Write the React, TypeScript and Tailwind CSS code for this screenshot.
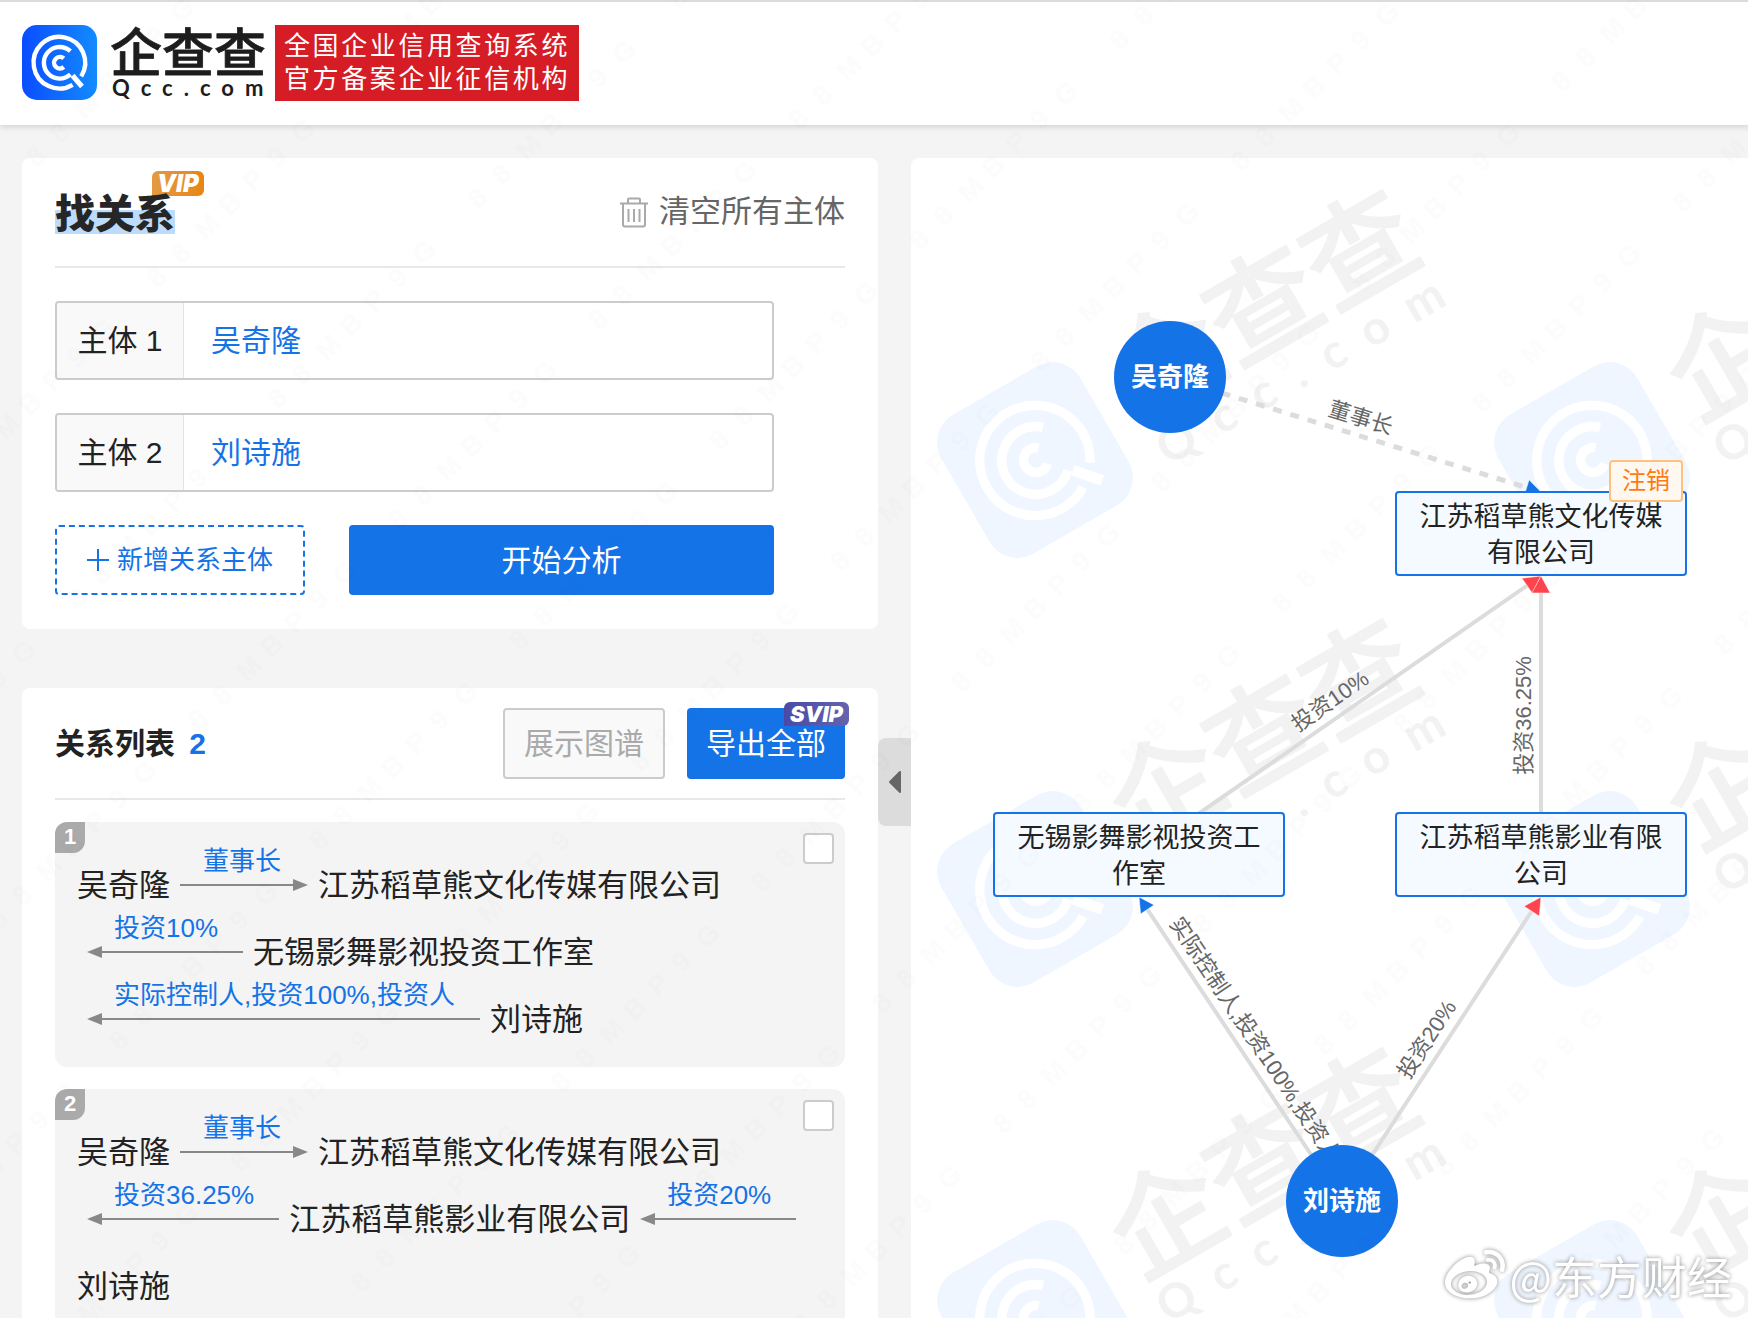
import { useState } from "react";
import clsx from "clsx";
import { FaWeibo } from "react-icons/fa";

type Side = "left" | "right";

interface Step {
  kind: "name" | "arrow";
  text: string;
  to?: Side;
}

interface Edge {
  from: [number, number];
  tip: [number, number];
  label: string;
  color: string;
  head: number;
  dashed?: boolean;
  flip?: boolean;
}

const BLUE = "#1573e8";
const RED = "#ff444d";

const RELATIONS: Step[][] = [
  [
    { kind: "name", text: "吴奇隆" },
    { kind: "arrow", text: "董事长", to: "right" },
    { kind: "name", text: "江苏稻草熊文化传媒有限公司" },
    { kind: "arrow", text: "投资10%", to: "left" },
    { kind: "name", text: "无锡影舞影视投资工作室" },
    { kind: "arrow", text: "实际控制人,投资100%,投资人", to: "left" },
    { kind: "name", text: "刘诗施" },
  ],
  [
    { kind: "name", text: "吴奇隆" },
    { kind: "arrow", text: "董事长", to: "right" },
    { kind: "name", text: "江苏稻草熊文化传媒有限公司" },
    { kind: "arrow", text: "投资36.25%", to: "left" },
    { kind: "name", text: "江苏稻草熊影业有限公司" },
    { kind: "arrow", text: "投资20%", to: "left" },
    { kind: "name", text: "刘诗施" },
  ],
];

// Graph coordinates are relative to the canvas panel
const EDGES: Edge[] = [
  { from: [259, 219], tip: [630, 334], label: "董事长", color: BLUE, head: 15, dashed: true },
  { from: [228, 697], tip: [630, 418], label: "投资10%", color: RED, head: 17 },
  { from: [630, 697], tip: [630, 418], label: "投资36.25%", color: RED, head: 17 },
  { from: [431, 1043], tip: [228, 739], label: "实际控制人,投资100%,投资人", color: BLUE, head: 15, flip: true },
  { from: [431, 1043], tip: [630, 739], label: "投资20%", color: RED, head: 17 },
];

const WATERMARKS = [0, 1, 2].flatMap(row => [0, 1].map(col => ({ x: 124 + col * 557, y: 302 + row * 429 })));

/* Badge plus wordmark, 243 x 75 units */
function BrandShapes({ badge, ink }: { badge: string; ink: string }) {
  return (
    <>
      <rect width="75" height="75" rx="15" fill={badge} />
      <g fill="none" stroke="#fff" strokeWidth="4.4">
        <path d="M59.2 51.4 A25.8 25.8 0 1 0 50.6 59.8" />
        <path d="M50.5 50.5 L60 61.5" strokeWidth="5" />
        <path d="M48.4 26.2 A15.8 15.8 0 1 0 48.4 49.4" />
        <path d="M41.8 33.4 A5.8 5.8 0 1 0 41.8 42" />
      </g>
      <text x="88" y="47" fill={ink} stroke={ink} strokeWidth="0.8" strokeLinejoin="round" fontSize="52" fontWeight="500" fontFamily="'Noto Sans CJK SC', sans-serif">
        企查查
      </text>
      <text x="90" y="71" fill={ink} fontSize="22" fontWeight="700" fontFamily="Lato, sans-serif" className="tracking-[0.5em]">
        Qcc.com
      </text>
    </>
  );
}

function Header() {
  return (
    <header className="relative z-10 flex h-[125px] shrink-0 items-center border-t-2 border-[#dadcdb] bg-white px-[22px] pb-0.5 shadow-[0_2px_6px_rgba(0,0,0,0.14)]">
      <a href="#" aria-label="企查查" className="mr-[9px] block">
        <svg width="244" height="76" viewBox="0 0 244 76" className="overflow-visible">
          <defs>
            <linearGradient id="brand" x1="0" x2="1" y1="0" y2="0">
              <stop offset="0" stopColor="#0a4dff" />
              <stop offset="1" stopColor="#138bff" />
            </linearGradient>
          </defs>
          <BrandShapes badge="url(#brand)" ink="#1d1d1d" />
        </svg>
      </a>
      <p className="bg-[#d61c25] px-[9px] py-[5px] text-[26px] leading-[33px] tracking-widest text-white">
        全国企业信用查询系统
        <br />
        官方备案企业征信机构
      </p>
    </header>
  );
}

function TrashIcon() {
  return (
    <svg width="28" height="31" viewBox="0 0 28 31" fill="none" stroke="#a9a9a9" strokeWidth="2">
      <path d="M0 6.5h28M8 6V2.5q0-1 1-1h10q1 0 1 1V6M3 7v20.5q0 2 2 2h18q2 0 2-2V7M8.500 12v13M14 12v13M19.500 12v13" />
    </svg>
  );
}

function SubjectField({ index, value, onChange }: { index: number; value: string; onChange: (v: string) => void }) {
  const id = `subject-${index}`;
  return (
    <div className="mr-[71px] flex h-[79px] overflow-hidden rounded border-2 border-[#ccc] bg-white">
      <label htmlFor={id} className="flex w-[127px] shrink-0 items-center justify-center border-r border-[#e4e4e4] bg-[#f9f9f9] text-[30px] text-[#222]">
        主体 {index}
      </label>
      <input
        id={id}
        value={value}
        onChange={e => onChange(e.target.value)}
        className="min-w-0 flex-1 px-[27px] text-[30px] text-[#1573e8] outline-none"
      />
    </div>
  );
}

function SearchCard() {
  const [subjects, setSubjects] = useState(["吴奇隆", "刘诗施"]);

  return (
    <section className="shrink-0 rounded-lg bg-white px-[33px] pb-[34px]">
      <div className="flex h-[110px] items-center justify-between border-b-2 border-[#e8e8e8]">
        <div className="relative mt-1">
          <span className="absolute -top-[23px] left-[97px] rounded-md rounded-bl-none bg-linear-to-r from-[#e39a44] to-[#e8850f] px-[5px] font-[Inter] text-2xl leading-[25px] font-black text-white italic">
            VIP
          </span>
          <h1 className="relative bg-linear-to-b from-transparent from-40% to-[#bddcfb] to-40% text-[40px] leading-10 font-black text-[#262626]">
            找关系
          </h1>
        </div>
        <button className="flex items-center gap-[11px] text-[31px] leading-10 text-[#666]" onClick={() => setSubjects(["", ""])}>
          <TrashIcon />
          清空所有主体
        </button>
      </div>

      <div className="mt-[33px] flex flex-col gap-[33px]">
        {subjects.map((s, i) => (
          <SubjectField
            key={i}
            index={i + 1}
            value={s}
            onChange={v => setSubjects(subjects.map((old, j) => (j === i ? v : old)))}
          />
        ))}
        <div className="mr-[71px] flex h-[70px] gap-11">
          <button className="flex w-[250px] items-center justify-center gap-2 rounded border-2 border-dashed border-[#1573e8] text-[26px] text-[#1573e8]">
            <svg width="22" height="22" viewBox="0 0 22 22" stroke="currentColor" strokeWidth="2">
              <path d="M11 0v22M0 11h22" />
            </svg>
            新增关系主体
          </button>
          <button className="flex-1 rounded bg-[#1573e8] text-[30px] text-white">开始分析</button>
        </div>
      </div>
    </section>
  );
}

function RelationArrow({ text, to }: { text: string; to: Side }) {
  return (
    <span className={clsx("relative mx-2.5 flex h-[67px] flex-col", to === "left" ? "pr-[25px] pl-[27px]" : "pr-[27px] pl-[23px]")}>
      <span className="-mt-[9px] text-[26px] leading-9 text-[#1573e8]">{text}</span>
      <span className="absolute inset-x-0 top-[27px] flex items-center">
        {to === "left" && <svg width="15" height="12"><path d="M15 0v12L0 6z" fill="#888" /></svg>}
        <span className="h-0.5 flex-1 bg-[#888]" />
        {to === "right" && <svg width="15" height="12"><path d="M0 0v12l15-6z" fill="#888" /></svg>}
      </span>
    </span>
  );
}

function RelationItem({ index, steps }: { index: number; steps: Step[] }) {
  return (
    <li className="relative flex flex-wrap rounded-xl bg-[#f4f4f4] px-[22px] pt-[30px] pb-[14px] text-[31px] leading-[67px] text-[#222]">
      <span className="absolute top-0 left-0 h-[31px] w-[30px] rounded-tl-xl rounded-br-xl bg-[#aaa] text-center text-[22px] leading-[30px] font-bold text-white">
        {index}
      </span>
      <input
        type="checkbox"
        aria-label={`选择关系 ${index}`}
        className="absolute top-[11px] right-[11px] size-[31px] appearance-none rounded border-2 border-[#ccc] bg-white checked:bg-[#1573e8]"
      />
      {steps.map((s, i) =>
        s.kind === "name" ? <span key={i}>{s.text}</span> : <RelationArrow key={i} text={s.text} to={s.to ?? "left"} />
      )}
    </li>
  );
}

function RelationCard() {
  return (
    <section className="rounded-t-lg bg-white px-[33px]">
      <div className="flex h-28 items-center justify-between border-b-2 border-[#e8e8e8]">
        <h2 className="text-[30px] font-bold text-[#222]">
          关系列表 <span className="ml-1.5 text-[#1573e8]">{RELATIONS.length}</span>
        </h2>
        <div className="flex gap-[22px]">
          <button disabled className="h-[71px] rounded border-2 border-[#ccc] bg-[#f9f9f9] px-[19px] text-[30px] text-[#aaa]">
            展示图谱
          </button>
          <button className="relative h-[71px] rounded bg-[#1573e8] px-[19px] text-[30px] text-white">
            导出全部
            <span className="absolute -top-1.5 -right-1 rounded-md rounded-bl-none bg-linear-to-r from-[#4a4aa6] to-[#6562ae] px-1.5 font-[Inter] text-[22px] leading-6 font-black italic">
              SVIP
            </span>
          </button>
        </div>
      </div>
      <ul className="mt-[22px] flex flex-col gap-[22px]">
        {RELATIONS.map((steps, i) => (
          <RelationItem key={i} index={i + 1} steps={steps} />
        ))}
      </ul>
    </section>
  );
}

function GraphEdge({ from, tip, label, color, head, dashed, flip }: Edge) {
  const dx = tip[0] - from[0];
  const dy = tip[1] - from[1];
  const len = Math.hypot(dx, dy);
  const angle = (Math.atan2(dy, dx) * 180) / Math.PI;
  const half = head * 0.54;
  return (
    <g transform={`translate(${from[0]} ${from[1]}) rotate(${angle})`}>
      <line x2={len - head} stroke="#dcdcdc" strokeWidth={dashed ? 5 : 4} strokeDasharray={dashed ? "9 9" : undefined} />
      <path d={`M${len} 0L${len - head} ${-half}V${half}Z`} fill={color} stroke="#fff" strokeWidth="0.5" />
      <text
        transform={flip ? `translate(${len / 2} 18) rotate(180)` : `translate(${len / 2} -18)`}
        dy="8"
        textAnchor="middle"
        fontSize="22"
        fill="#666"
      >
        {label}
      </text>
    </g>
  );
}

function PersonNode({ name, className }: { name: string; className: string }) {
  return (
    <div className={clsx("absolute flex size-28 items-center justify-center rounded-full bg-[#1573e8] text-[26px] font-bold text-white", className)}>
      {name}
    </div>
  );
}

function CompanyNode({ name, tag, className }: { name: string; tag?: string; className: string }) {
  return (
    <div className={clsx("absolute flex h-[85px] w-[292px] items-center rounded border-2 border-[#1573e8] bg-[#f4faff] px-[22px] pt-0.5 text-center text-[27px] leading-9 text-[#222]", className)}>
      <span className="break-all">{name}</span>
      {tag && (
        <span className="absolute -top-[33px] right-0.5 rounded border-2 border-[#ffc27d] bg-[#fff8f0] px-[11px] text-2xl leading-[38px] text-[#ff7a0f]">
          {tag}
        </span>
      )}
    </div>
  );
}

function GraphPanel() {
  return (
    <section className="relative min-w-0 flex-1 overflow-hidden rounded-tl-lg bg-white">
      <svg className="absolute inset-0 size-full">
        {WATERMARKS.map(({ x, y }) => (
          <g key={`${x}-${y}`} transform={`translate(${x} ${y}) rotate(-30) scale(2.14) translate(-37.5 -37.5)`}>
            <BrandShapes badge="#eff6ff" ink="#f2f2f2" />
          </g>
        ))}
        {EDGES.map(e => <GraphEdge key={e.label} {...e} />)}
      </svg>
      <PersonNode name="吴奇隆" className="top-[163px] left-[203px]" />
      <PersonNode name="刘诗施" className="top-[987px] left-[375px]" />
      <CompanyNode name="江苏稻草熊文化传媒有限公司" tag="注销" className="top-[333px] left-[484px]" />
      <CompanyNode name="无锡影舞影视投资工作室" className="top-[654px] left-[82px]" />
      <CompanyNode name="江苏稻草熊影业有限公司" className="top-[654px] left-[484px]" />
      <div className="absolute right-4 bottom-3 flex items-center gap-1 text-[45px] leading-[60px] text-white [filter:drop-shadow(0_0_2px_#888)]">
        <FaWeibo className="size-[60px]" />
        <span className="font-['Noto_Sans_CJK_SC']">@东方财经</span>
      </div>
    </section>
  );
}

/* Account code repeated diagonally over the whole page */
function CodeOverlay() {
  return (
    <svg className="pointer-events-none absolute inset-0 z-20 size-full">
      <defs>
        <pattern id="code" width="283" height="171" patternUnits="userSpaceOnUse" patternTransform="translate(1016 353) rotate(-45)">
          <text x="4 38 72 106 140 174 208" y="32" fontSize="28" fontWeight="700" fill="#000" fillOpacity="0.012">88MBP9G</text>
        </pattern>
      </defs>
      <rect width="100%" height="100%" fill="url(#code)" />
    </svg>
  );
}

export default function App() {
  return (
    <div className="relative flex h-screen flex-col overflow-hidden bg-[#f4f4f4] font-['Liberation_Sans','Noto_Sans_CJK_SC',sans-serif]">
      <Header />
      <main className="flex min-h-0 flex-1 pt-[33px] pl-[22px]">
        <div className="flex w-[856px] shrink-0 flex-col gap-[59px] overflow-hidden">
          <SearchCard />
          <RelationCard />
        </div>
        <button aria-label="收起" className="mt-[580px] flex h-[88px] w-[33px] shrink-0 items-center justify-center rounded-l-lg bg-[#dcdcdc]">
          <svg width="12" height="22" viewBox="0 0 12 22">
            <path d="M11 1v20L1 11z" fill="#666" stroke="#666" strokeWidth="2" strokeLinejoin="round" />
          </svg>
        </button>
        <GraphPanel />
      </main>
      <CodeOverlay />
    </div>
  );
}
